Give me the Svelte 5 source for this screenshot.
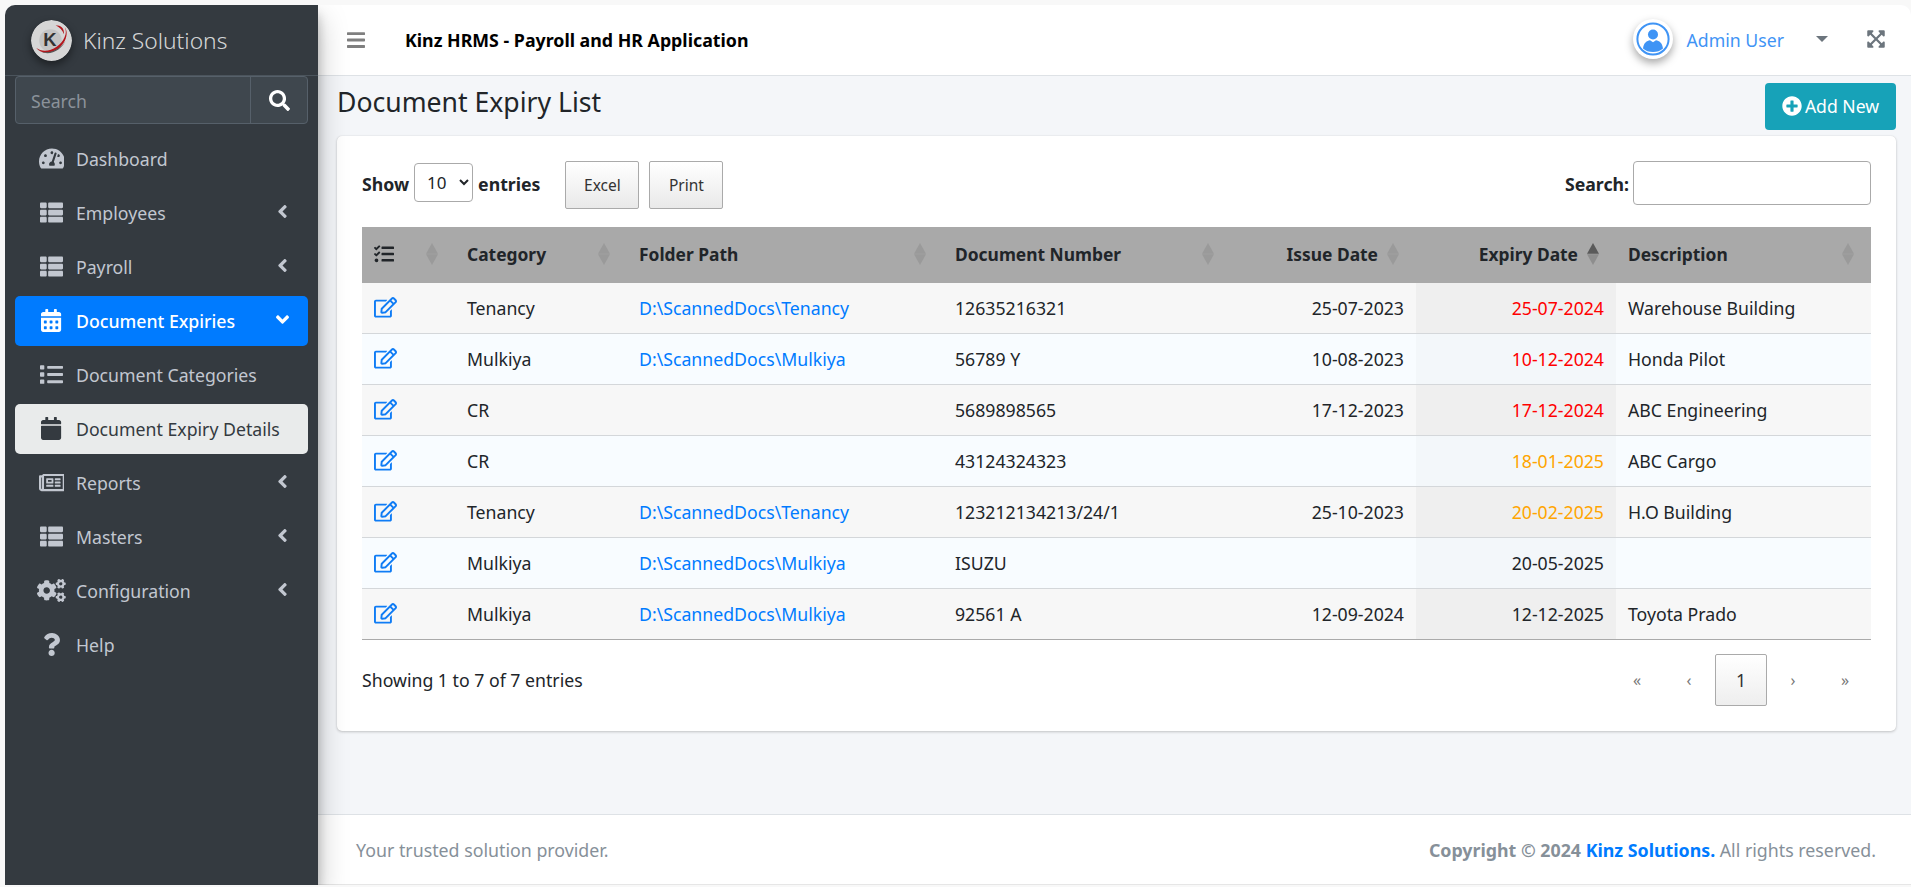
<script>
  const P = {
    dash: [576, "M288 32C128.94 32 0 160.94 0 320c0 52.8 14.25 102.26 39.06 144.8 5.61 9.62 16.3 15.2 27.44 15.2h443c11.14 0 21.83-5.58 27.44-15.2C561.75 422.26 576 372.8 576 320c0-159.06-128.94-288-288-288zm0 64c14.71 0 26.58 10.13 30.32 23.65-1.11 2.26-2.64 4.23-3.45 6.67l-9.22 27.67c-5.13 3.49-10.97 6.01-17.64 6.01-17.67 0-32-14.33-32-32S270.33 96 288 96zM96 384c-17.67 0-32-14.33-32-32s14.33-32 32-32 32 14.33 32 32-14.33 32-32 32zm48-160c-17.67 0-32-14.33-32-32s14.33-32 32-32 32 14.33 32 32-14.33 32-32 32zm246.77-72.41l-61.33 184C343.13 347.33 352 364.54 352 384c0 11.72-3.38 22.55-8.88 32H232.88c-5.5-9.45-8.88-20.28-8.88-32 0-33.94 26.5-61.43 59.9-63.59l61.34-184.01c4.17-12.56 17.73-19.45 30.36-15.17 12.57 4.19 19.35 17.79 15.17 30.36zm14.66 57.2l15.52-46.55c3.47-1.29 7.13-2.23 11.05-2.23 17.67 0 32 14.33 32 32s-14.33 32-32 32c-11.38-.01-20.89-6.28-26.57-15.22zM480 384c-17.67 0-32-14.33-32-32s14.33-32 32-32 32 14.33 32 32-14.33 32-32 32z"],
    thlist: [512, "M149.333 216v80c0 13.255-10.745 24-24 24H24c-13.255 0-24-10.745-24-24v-80c0-13.255 10.745-24 24-24h101.333c13.255 0 24 10.745 24 24zM0 376v80c0 13.255 10.745 24 24 24h101.333c13.255 0 24-10.745 24-24v-80c0-13.255-10.745-24-24-24H24c-13.255 0-24 10.745-24 24zM125.333 32H24C10.745 32 0 42.745 0 56v80c0 13.255 10.745 24 24 24h101.333c13.255 0 24-10.745 24-24V56c0-13.255-10.745-24-24-24zm80 448H488c13.255 0 24-10.745 24-24v-80c0-13.255-10.745-24-24-24H205.333c-13.255 0-24 10.745-24 24v80c0 13.255 10.745 24 24 24zm-24-424v80c0 13.255 10.745 24 24 24H488c13.255 0 24-10.745 24-24V56c0-13.255-10.745-24-24-24H205.333c-13.255 0-24 10.745-24 24zm24 264H488c13.255 0 24-10.745 24-24v-80c0-13.255-10.745-24-24-24H205.333c-13.255 0-24 10.745-24 24v80c0 13.255 10.745 24 24 24z"],
    calalt: [448, "M0 464c0 26.5 21.5 48 48 48h352c26.5 0 48-21.5 48-48V192H0v272zm320-196c0-6.6 5.4-12 12-12h40c6.6 0 12 5.4 12 12v40c0 6.6-5.4 12-12 12h-40c-6.6 0-12-5.4-12-12v-40zm0 128c0-6.6 5.4-12 12-12h40c6.6 0 12 5.4 12 12v40c0 6.6-5.4 12-12 12h-40c-6.6 0-12-5.4-12-12v-40zM192 268c0-6.6 5.4-12 12-12h40c6.6 0 12 5.4 12 12v40c0 6.6-5.4 12-12 12h-40c-6.6 0-12-5.4-12-12v-40zm0 128c0-6.6 5.4-12 12-12h40c6.6 0 12 5.4 12 12v40c0 6.6-5.4 12-12 12h-40c-6.6 0-12-5.4-12-12v-40zM64 268c0-6.6 5.4-12 12-12h40c6.6 0 12 5.4 12 12v40c0 6.6-5.4 12-12 12H76c-6.6 0-12-5.4-12-12v-40zm0 128c0-6.6 5.4-12 12-12h40c6.6 0 12 5.4 12 12v40c0 6.6-5.4 12-12 12H76c-6.6 0-12-5.4-12-12v-40zM400 64h-48V16c0-8.8-7.2-16-16-16h-32c-8.8 0-16 7.2-16 16v48H160V16c0-8.8-7.2-16-16-16h-32c-8.8 0-16 7.2-16 16v48H48C21.5 64 0 85.5 0 112v48h448v-48c0-26.5-21.5-48-48-48z"],
    cal: [448, "M12 192h424c6.6 0 12 5.4 12 12v260c0 26.5-21.5 48-48 48H48c-26.5 0-48-21.5-48-48V204c0-6.6 5.4-12 12-12zm436-44v-36c0-26.5-21.5-48-48-48h-48V12c0-6.6-5.4-12-12-12h-40c-6.6 0-12 5.4-12 12v52H160V12c0-6.6-5.4-12-12-12h-40c-6.6 0-12 5.4-12 12v52H48C21.5 64 0 85.5 0 112v36c0 6.6 5.4 12 12 12h424c6.6 0 12-5.4 12-12z"],
    list: [512, "M80 368H16a16 16 0 0 0-16 16v64a16 16 0 0 0 16 16h64a16 16 0 0 0 16-16v-64a16 16 0 0 0-16-16zm0-320H16A16 16 0 0 0 0 64v64a16 16 0 0 0 16 16h64a16 16 0 0 0 16-16V64a16 16 0 0 0-16-16zm0 160H16a16 16 0 0 0-16 16v64a16 16 0 0 0 16 16h64a16 16 0 0 0 16-16v-64a16 16 0 0 0-16-16zm416 176H176a16 16 0 0 0-16 16v32a16 16 0 0 0 16 16h320a16 16 0 0 0 16-16v-32a16 16 0 0 0-16-16zm0-320H176a16 16 0 0 0-16 16v32a16 16 0 0 0 16 16h320a16 16 0 0 0 16-16V80a16 16 0 0 0-16-16zm0 160H176a16 16 0 0 0-16 16v32a16 16 0 0 0 16 16h320a16 16 0 0 0 16-16v-32a16 16 0 0 0-16-16z"],
    news: [576, "M552 64H112c-20.858 0-38.643 13.377-45.248 32H24c-13.255 0-24 10.745-24 24v272c0 30.928 25.072 56 56 56h496c13.255 0 24-10.745 24-24V88c0-13.255-10.745-24-24-24zM48 392V144h16v248c0 4.411-3.589 8-8 8s-8-3.589-8-8zm480 8H111.422c.374-2.614.578-5.283.578-8V112h416v288zM172 280h136c6.627 0 12-5.373 12-12v-96c0-6.627-5.373-12-12-12H172c-6.627 0-12 5.373-12 12v96c0 6.627 5.373 12 12 12zm28-80h80v40h-80v-40zm-40 140v-24c0-6.627 5.373-12 12-12h136c6.627 0 12 5.373 12 12v24c0 6.627-5.373 12-12 12H172c-6.627 0-12-5.373-12-12zm192 0v-24c0-6.627 5.373-12 12-12h104c6.627 0 12 5.373 12 12v24c0 6.627-5.373 12-12 12H364c-6.627 0-12-5.373-12-12zm0-144v-24c0-6.627 5.373-12 12-12h104c6.627 0 12 5.373 12 12v24c0 6.627-5.373 12-12 12H364c-6.627 0-12-5.373-12-12zm0 72v-24c0-6.627 5.373-12 12-12h104c6.627 0 12 5.373 12 12v24c0 6.627-5.373 12-12 12H364c-6.627 0-12-5.373-12-12z"],
    cogs: [640, "M512.1 191l-8.2 14.3c-3 5.3-9.4 7.5-15.1 5.4-11.8-4.4-22.6-10.7-32.1-18.6-4.6-3.8-5.8-10.5-2.8-15.7l8.2-14.3c-6.9-8-12.3-17.3-15.9-27.4h-16.5c-6 0-11.2-4.3-12.2-10.3-2-12-2.1-24.6 0-37.1 1-6 6.2-10.4 12.2-10.4h16.5c3.6-10.1 9-19.4 15.9-27.4l-8.2-14.3c-3-5.2-1.9-11.9 2.8-15.7 9.5-7.9 20.4-14.2 32.1-18.6 5.7-2.1 12.1.1 15.1 5.4l8.2 14.3c10.5-1.9 21.2-1.9 31.7 0L552 6.3c3-5.3 9.4-7.5 15.1-5.4 11.8 4.4 22.6 10.7 32.1 18.6 4.6 3.8 5.8 10.5 2.8 15.7l-8.2 14.3c6.9 8 12.3 17.3 15.9 27.4h16.5c6 0 11.2 4.3 12.2 10.3 2 12 2.1 24.6 0 37.1-1 6-6.2 10.4-12.2 10.4h-16.5c-3.6 10.1-9 19.4-15.9 27.4l8.2 14.3c3 5.2 1.9 11.9-2.8 15.7-9.5 7.9-20.4 14.2-32.1 18.6-5.7 2.1-12.1-.1-15.1-5.4l-8.2-14.3c-10.4 1.9-21.2 1.9-31.7 0zm-10.5-58.8c38.5 29.6 82.4-14.3 52.8-52.8-38.5-29.7-82.4 14.3-52.8 52.8zM386.3 286.1l33.7 16.8c10.1 5.8 14.5 18.1 10.5 29.1-8.9 24.2-26.4 46.4-42.6 65.8-7.4 8.9-20.2 11.1-30.3 5.3l-29.1-16.8c-16 13.7-34.6 24.6-54.9 31.7v33.6c0 11.6-8.3 21.6-19.7 23.6-24.6 4.2-50.4 4.4-75.9 0-11.5-2-20-11.9-20-23.6V418c-20.3-7.2-38.9-18-54.9-31.7L74 403c-10 5.8-22.9 3.6-30.3-5.3-16.2-19.4-33.3-41.6-42.2-65.7-4-10.9.4-23.2 10.5-29.1l33.3-16.8c-3.9-20.9-3.9-42.4 0-63.4L12 205.8c-10.1-5.8-14.6-18.1-10.5-29 8.9-24.2 26-46.4 42.2-65.8 7.4-8.9 20.2-11.1 30.3-5.3l29.1 16.8c16-13.7 34.6-24.6 54.9-31.7V57.1c0-11.5 8.2-21.5 19.6-23.5 24.6-4.2 50.5-4.4 76-.1 11.5 2 20 11.9 20 23.6v33.6c20.3 7.2 38.9 18 54.9 31.7l29.1-16.8c10-5.8 22.9-3.6 30.3 5.3 16.2 19.4 33.2 41.6 42.1 65.8 4 10.9.1 23.2-10 29.1l-33.7 16.8c3.9 21 3.9 42.5 0 63.5zm-117.6 21.1c59.2-77-28.7-164.9-105.7-105.7-59.2 77 28.7 164.9 105.7 105.7zm243.4 182.7l-8.2 14.3c-3 5.3-9.4 7.5-15.1 5.4-11.8-4.4-22.6-10.7-32.1-18.6-4.6-3.8-5.8-10.5-2.8-15.7l8.2-14.3c-6.9-8-12.3-17.3-15.9-27.4h-16.5c-6 0-11.2-4.3-12.2-10.3-2-12-2.1-24.6 0-37.1 1-6 6.2-10.4 12.2-10.4h16.5c3.6-10.1 9-19.4 15.9-27.4l-8.2-14.3c-3-5.2-1.9-11.9 2.8-15.7 9.5-7.9 20.4-14.2 32.1-18.6 5.7-2.1 12.1.1 15.1 5.4l8.2 14.3c10.5-1.9 21.2-1.9 31.7 0l8.2-14.3c3-5.3 9.4-7.5 15.1-5.4 11.8 4.4 22.6 10.7 32.1 18.6 4.6 3.8 5.8 10.5 2.8 15.7l-8.2 14.3c6.9 8 12.3 17.3 15.9 27.4h16.5c6 0 11.2 4.3 12.2 10.3 2 12 2.1 24.6 0 37.1-1 6-6.2 10.4-12.2 10.4h-16.5c-3.6 10.1-9 19.4-15.9 27.4l8.2 14.3c3 5.2 1.9 11.9-2.8 15.7-9.5 7.9-20.4 14.2-32.1 18.6-5.7 2.1-12.1-.1-15.1-5.4l-8.2-14.3c-10.4 1.9-21.2 1.9-31.7 0zM501.6 431c38.5 29.6 82.4-14.3 52.8-52.8-38.5-29.6-82.4 14.3-52.8 52.8z"],
    help: [384, "M202.021 0C122.202 0 70.503 32.703 29.914 91.026c-7.363 10.58-5.093 25.086 5.178 32.874l43.138 32.709c10.373 7.865 25.132 6.026 33.253-4.148 25.049-31.381 43.63-49.449 82.757-49.449 30.764 0 68.816 19.799 68.816 49.631 0 22.552-18.617 34.134-48.993 51.164-35.423 19.86-82.299 44.576-82.299 106.405V320c0 13.255 10.745 24 24 24h72.471c13.255 0 24-10.745 24-24v-5.773c0-42.86 125.268-44.645 125.268-160.627C377.504 66.256 286.902 0 202.021 0zM192 373.459c-38.196 0-69.271 31.075-69.271 69.271 0 38.195 31.075 69.27 69.271 69.27s69.271-31.075 69.271-69.271-31.075-69.27-69.271-69.27z"],
    left: [256, "M31.7 239l136-136c9.4-9.4 24.6-9.4 33.9 0l22.6 22.6c9.4 9.4 9.4 24.6 0 33.9L127.9 256l96.4 96.4c9.4 9.4 9.4 24.6 0 33.9L201.7 409c-9.4 9.4-24.6 9.4-33.9 0l-136-136c-9.5-9.4-9.5-24.6-.1-34z"],
    down: [320, "M143 352.3L7 216.3c-9.4-9.4-9.4-24.6 0-33.9l22.6-22.6c9.4-9.4 24.6-9.4 33.9 0l96.4 96.4 96.4-96.4c9.4-9.4 24.6-9.4 33.9 0l22.6 22.6c9.4 9.4 9.4 24.6 0 33.9l-136 136c-9.2 9.4-24.4 9.4-33.8 0z"],
    search: [512, "M505 442.7L405.3 343c-4.5-4.5-10.6-7-17-7H372c27.6-35.3 44-79.7 44-128C416 93.1 322.9 0 208 0S0 93.1 0 208s93.1 208 208 208c48.3 0 92.7-16.4 128-44v16.3c0 6.4 2.5 12.5 7 17l99.7 99.7c9.4 9.4 24.6 9.4 33.9 0l28.3-28.3c9.4-9.4 9.4-24.6.1-34zM208 336c-70.7 0-128-57.2-128-128 0-70.7 57.2-128 128-128 70.7 0 128 57.2 128 128 0 70.7-57.2 128-128 128z"],
    bars: [448, "M16 132h416c8.837 0 16-7.163 16-16V76c0-8.837-7.163-16-16-16H16C7.163 60 0 67.163 0 76v40c0 8.837 7.163 16 16 16zm0 160h416c8.837 0 16-7.163 16-16v-40c0-8.837-7.163-16-16-16H16c-8.837 0-16 7.163-16 16v40c0 8.837 7.163 16 16 16zm0 160h416c8.837 0 16-7.163 16-16v-40c0-8.837-7.163-16-16-16H16c-8.837 0-16 7.163-16 16v40c0 8.837 7.163 16 16 16z"],
    expand: [448, "M448 344v112a23.94 23.94 0 0 1-24 24H312c-21.39 0-32.09-25.9-17-41l36.2-36.2L224 295.6 116.77 402.9 153 439c15.09 15.1 4.39 41-17 41H24a23.94 23.94 0 0 1-24-24V344c0-21.4 25.89-32.1 41-17l36.19 36.2L184.46 256 77.18 148.7 41 185c-15.1 15.1-41 4.4-41-17V56a23.94 23.94 0 0 1 24-24h112c21.39 0 32.09 25.9 17 41l-36.2 36.2L224 216.4l107.23-107.3L295 73c-15.09-15.1-4.39-41 17-41h112a23.94 23.94 0 0 1 24 24v112c0 21.4-25.89 32.1-41 17l-36.19-36.2L263.54 256l107.28 107.3L407 327.1c15.1-15.2 41-4.5 41 16.9z"],
    plus: [512, "M256 8C119 8 8 119 8 256s111 248 248 248 248-111 248-248S393 8 256 8zm144 276c0 6.6-5.4 12-12 12h-92v92c0 6.6-5.4 12-12 12h-56c-6.6 0-12-5.4-12-12v-92h-92c-6.6 0-12-5.4-12-12v-56c0-6.6 5.4-12 12-12h92v-92c0-6.6 5.4-12 12-12h56c6.6 0 12 5.4 12 12v92h92c6.6 0 12 5.4 12 12v56z"],
    edit: [576, "M402.3 344.9l32-32c5-5 13.7-1.5 13.7 5.7V464c0 26.5-21.5 48-48 48H48c-26.5 0-48-21.5-48-48V112c0-26.5 21.5-48 48-48h273.5c7.1 0 10.7 8.6 5.7 13.7l-32 32c-1.5 1.5-3.5 2.3-5.7 2.3H48v352h352V350.5c0-2.1.8-4.1 2.3-5.6zm156.6-201.8L296.3 405.7l-90.4 10c-26.2 2.9-48.5-19.2-45.6-45.6l10-90.4L432.9 17.1c22.9-22.9 59.9-22.9 82.7 0l43.2 43.2c22.9 22.9 22.9 60 .1 82.8zM460.1 174L402 115.9 216.2 301.8l-7.3 65.3 65.3-7.3L460.1 174zm64.8-79.7l-43.2-43.2c-4.1-4.1-10.8-4.1-14.8 0L436 82l58.1 58.1 30.9-30.9c4-4.2 4-10.8-.1-14.9z"],
    tasks: [512, "M139.61 35.5a12 12 0 0 0-17 0L58.93 98.81l-22.7-22.12a12 12 0 0 0-17 0L3.53 92.41a12 12 0 0 0 0 17l47.59 47.4a12.78 12.78 0 0 0 17.61 0l15.59-15.62L156.52 69a12.09 12.09 0 0 0 .09-17zm0 159.19a12 12 0 0 0-17 0l-63.68 63.72-22.7-22.1a12 12 0 0 0-17 0L3.53 252a12 12 0 0 0 0 17L51 316.5a12.77 12.77 0 0 0 17.6 0l15.7-15.69 72.2-72.22a12 12 0 0 0 .09-16.9zM64 368c-26.49 0-48.59 21.5-48.59 48S37.53 464 64 464a48 48 0 0 0 0-96zm432 16H208a16 16 0 0 0-16 16v32a16 16 0 0 0 16 16h288a16 16 0 0 0 16-16v-32a16 16 0 0 0-16-16zm0-320H208a16 16 0 0 0-16 16v32a16 16 0 0 0 16 16h288a16 16 0 0 0 16-16V80a16 16 0 0 0-16-16zm0 160H208a16 16 0 0 0-16 16v32a16 16 0 0 0 16 16h288a16 16 0 0 0 16-16v-32a16 16 0 0 0-16-16z"]
  };

  const nav = [
    { icon: 'dash', label: 'Dashboard' },
    { icon: 'thlist', label: 'Employees', arrow: true },
    { icon: 'thlist', label: 'Payroll', arrow: true },
    { icon: 'calalt', label: 'Document Expiries', open: true, cls: 'active' },
    { icon: 'list', label: 'Document Categories' },
    { icon: 'cal', label: 'Document Expiry Details', cls: 'current' },
    { icon: 'news', label: 'Reports', arrow: true },
    { icon: 'thlist', label: 'Masters', arrow: true },
    { icon: 'cogs', label: 'Configuration', arrow: true },
    { icon: 'help', label: 'Help' }
  ];

  const heads = [
    { label: '', cls: 'c0' },
    { label: 'Category', cls: 'c1' },
    { label: 'Folder Path', cls: 'c2' },
    { label: 'Document Number', cls: 'c3' },
    { label: 'Issue Date', cls: 'c4 right' },
    { label: 'Expiry Date', cls: 'c5 right', sorted: true },
    { label: 'Description', cls: 'c6' }
  ];

  const rows = [
    ['Tenancy', 'D:\\ScannedDocs\\Tenancy', '12635216321', '25-07-2023', '25-07-2024', 'red', 'Warehouse Building'],
    ['Mulkiya', 'D:\\ScannedDocs\\Mulkiya', '56789 Y', '10-08-2023', '10-12-2024', 'red', 'Honda Pilot'],
    ['CR', '', '5689898565', '17-12-2023', '17-12-2024', 'red', 'ABC Engineering'],
    ['CR', '', '43124324323', '', '18-01-2025', 'orange', 'ABC Cargo'],
    ['Tenancy', 'D:\\ScannedDocs\\Tenancy', '123212134213/24/1', '25-10-2023', '20-02-2025', 'orange', 'H.O Building'],
    ['Mulkiya', 'D:\\ScannedDocs\\Mulkiya', 'ISUZU', '', '20-05-2025', '', ''],
    ['Mulkiya', 'D:\\ScannedDocs\\Mulkiya', '92561 A', '12-09-2024', '12-12-2025', '', 'Toyota Prado']
  ];
</script>

{#snippet ic(name, cls)}
  <svg class={cls} viewBox="0 0 {P[name][0]} 512" aria-hidden="true"><path fill="currentColor" d={P[name][1]} /></svg>
{/snippet}

{#snippet sortIcon(sorted)}
  <svg class="sort" class:sorted viewBox="0 0 12 22" aria-hidden="true">
    <path class="up" d="M6 0 12 10.700H0Z" />
    <path class="dn" d="M6 22 0 11.300H12Z" />
  </svg>
{/snippet}

<div class="shell">
  <aside class="sidebar">
    <div class="brand">
      <svg class="logo" viewBox="0 0 40 40" aria-hidden="true">
        <circle cx="20" cy="20" r="20" fill="#d6d6d6" />
        <circle cx="19" cy="20" r="11" fill="#c4c4c4" />
        <path d="M5 27C11 35 25 33 32 22 35 17 36 11 33 7 36 13 32 21 25 26 18 31 10 31 5 27Z" fill="#b3171d" />
        <path d="M24 5C29 5 33 8 32 14 31 10 28 7 24 5Z" fill="#b3171d" />
        <path d="M10 31C18 35 30 30 35 18 31 27 20 33 10 31Z" fill="#555" />
        <text x="18.5" y="25.5" class="logok">K</text>
      </svg>
      <span class="brandname">Kinz Solutions</span>
    </div>
    <div class="sidesearch">
      <div class="sideinput">Search</div>
      <div class="sidebtn">{@render ic('search', 'searchicon')}</div>
    </div>
    <nav class="menu">
      {#each nav as n}
        <div class="item {n.cls ?? ''}">
          <span class="iconbox">{@render ic(n.icon, 'navicon')}</span>
          <span class="navlabel">{n.label}</span>
          {#if n.arrow}{@render ic('left', 'chev')}{/if}
          {#if n.open}{@render ic('down', 'chevd')}{/if}
        </div>
      {/each}
    </nav>
  </aside>

  <div class="main">
    <header class="topbar">
      {@render ic('bars', 'bars')}
      <span class="apptitle">Kinz HRMS - Payroll and HR Application</span>
      <span class="spacer"></span>
      <span class="avatar">
        <svg viewBox="0 0 34 34" aria-hidden="true">
          <circle cx="17" cy="17" r="15.6" fill="#fff" stroke="#3f94f5" stroke-width="2" />
          <circle cx="17" cy="12.5" r="5" fill="#3f94f5" />
          <path d="M7 26.5c.5-5.5 4-8 7-8.3l3 2 3-2c3 .3 6.5 2.8 7 8.3-2.6 2.3-6 3.6-10 3.6s-7.4-1.300-10-3.600Z" fill="#3f94f5" />
        </svg>
      </span>
      <span class="username">Admin User</span>
      <span class="caret"></span>
      {@render ic('expand', 'expand')}
    </header>

    <main class="content">
      <div class="titlebar">
        <h1>Document Expiry List</h1>
        <div class="addnew">{@render ic('plus', 'plus')}<span>Add New</span></div>
      </div>

      <section class="card">
        <div class="tools">
          <label class="strong" for="len">Show</label>
          <select id="len" class="len"><option>10</option></select>
          <span class="strong entries">entries</span>
          <button class="dtbtn first">Excel</button>
          <button class="dtbtn">Print</button>
          <span class="spacer"></span>
          <label class="strong searchlbl" for="q">Search:</label>
          <input id="q" class="q" />
        </div>

        <table>
          <thead>
            <tr>
              {#each heads as h, i}
                <th class={h.cls}>
                  <span class="thin">
                    {#if i === 0}{@render ic('tasks', 'tasks')}{:else}{h.label}{/if}
                  </span>
                  {@render sortIcon(h.sorted)}
                </th>
              {/each}
            </tr>
          </thead>
          <tbody>
            {#each rows as r}
              <tr>
                <td>{@render ic('edit', 'edit')}</td>
                <td>{r[0]}</td>
                <td class="link">{r[1]}</td>
                <td>{r[2]}</td>
                <td class="right">{r[3]}</td>
                <td class="right sortcol {r[5]}">{r[4]}</td>
                <td>{r[6]}</td>
              </tr>
            {/each}
          </tbody>
        </table>

        <div class="tfoot">
          <span class="info">Showing 1 to 7 of 7 entries</span>
          <span class="spacer"></span>
          <span class="pg">«</span>
          <span class="pg">‹</span>
          <span class="pgcur">1</span>
          <span class="pg">›</span>
          <span class="pg">»</span>
        </div>
      </section>
    </main>

    <footer class="foot">
      <span>Your trusted solution provider.</span>
      <span class="spacer"></span>
      <span><b>Copyright © 2024 <em>Kinz Solutions.</em></b> All rights reserved.</span>
    </footer>
  </div>
</div>

<style>
  :global(body) {
    margin: 0;
    background: #f8f8f8;
    font-family: "Noto Sans", "Open Sans", sans-serif;
    color: #212529;
  }
  .shell {
    display: flex;
    height: 880px;
    margin: 5px 0 2px 5px;
    overflow: hidden;
    border-radius: 10px 10px 0 0;
  }
  .sidebar {
    width: 313px;
    flex: none;
    background: #343a40;
    box-shadow: 0 14px 28px rgba(0, 0, 0, .25), 0 10px 10px rgba(0, 0, 0, .22);
    position: relative;
    z-index: 2;
    font-size: 17.7px;
  }
  .brand {
    height: 71px;
    box-sizing: border-box;
    border-bottom: 1px solid #4b545c;
    display: flex;
    align-items: center;
    padding-left: 26px;
    gap: 11px;
  }
  .logo {
    width: 41px;
    height: 41px;
    border-radius: 50%;
    box-shadow: 0 4px 8px rgba(0, 0, 0, .45);
  }
  .logok {
    font: 700 18px "Liberation Sans", sans-serif;
    fill: #333;
    text-anchor: middle;
  }
  .brandname {
    font-size: 22.8px;
    font-weight: 300;
    color: rgba(255, 255, 255, .8);
  }
  .sidesearch {
    display: flex;
    height: 48px;
    margin: 0 10px;
    border: 1px solid #56606a;
    border-radius: 4px;
    background: #3f474e;
    box-sizing: border-box;
  }
  .sideinput {
    flex: 1;
    padding-left: 15px;
    color: #8b929a;
    line-height: 48px;
  }
  .sidebtn {
    width: 56px;
    border-left: 1px solid #56606a;
    display: flex;
    align-items: center;
    justify-content: center;
  }
  .searchicon {
    width: 21px;
    height: 21px;
    color: #fff;
  }
  .menu {
    padding: 10px 10px 0;
    display: flex;
    flex-direction: column;
    gap: 4px;
  }
  .item {
    height: 50px;
    display: flex;
    align-items: center;
    border-radius: 5px;
    color: #c2c7d0;
    position: relative;
  }
  .item.active {
    background: #007bff;
    color: #fff;
    font-weight: 500;
  }
  .item.current {
    background: #e9ebeb;
    color: #343a40;
  }
  .iconbox {
    width: 61px;
    padding-left: 12px;
    box-sizing: border-box;
    display: flex;
    justify-content: center;
    flex: none;
  }
  .navicon {
    height: 23px;
    margin-top: -2px;
    display: block;
  }
  .chev {
    position: absolute;
    right: 20px;
    width: 11px;
    height: 21px;
    top: 13px;
  }
  .chevd {
    position: absolute;
    right: 19px;
    width: 13px;
    height: 21px;
    top: 13px;
  }
  .main {
    flex: 1;
    min-width: 0;
    display: flex;
    flex-direction: column;
    background: #f4f6f9;
  }
  .topbar {
    height: 71px;
    flex: none;
    box-sizing: border-box;
    border-bottom: 1px solid #dee2e6;
    background: #fff;
    display: flex;
    align-items: center;
    padding: 0 26px 0 29px;
  }
  .bars {
    width: 18px;
    height: 24px;
    color: rgba(0, 0, 0, .5);
  }
  .apptitle {
    margin-left: 40px;
    font-size: 17.8px;
    font-weight: 700;
    color: #000;
  }
  .spacer {
    flex: 1;
  }
  .avatar {
    width: 40px;
    height: 40px;
    margin-bottom: 3px;
    border-radius: 50%;
    background: #fff;
    box-shadow: 0 4px 8px rgba(0, 0, 0, .35);
    display: flex;
    align-items: center;
    justify-content: center;
  }
  .avatar svg {
    width: 34px;
    height: 34px;
  }
  .username {
    margin-left: 14px;
    font-size: 17.7px;
    color: #3f94f5;
  }
  .caret {
    margin-left: 32px;
    border-top: 6px solid #6c757d;
    border-left: 6px solid transparent;
    border-right: 6px solid transparent;
    margin-bottom: 3px;
  }
  .expand {
    margin-left: 39px;
    width: 18px;
    height: 20px;
    margin-bottom: 2px;
    color: #6c757d;
  }
  .content {
    flex: 1;
    padding: 7px 15px 0 19px;
  }
  .titlebar {
    display: flex;
    justify-content: space-between;
    align-items: flex-start;
    height: 53px;
  }
  h1 {
    margin: 0;
    font-size: 26.6px;
    font-weight: 400;
    line-height: 38px;
  }
  .addnew {
    width: 131px;
    height: 47px;
    padding-bottom: 2px;
    box-sizing: border-box;
    background: #17a2b8;
    color: #fff;
    border-radius: 4px;
    display: flex;
    align-items: center;
    justify-content: center;
    gap: 3px;
    font-size: 17.6px;
  }
  .plus {
    width: 20px;
    height: 20px;
  }
  .card {
    height: 595px;
    box-sizing: border-box;
    background: #fff;
    border-radius: 5px;
    box-shadow: 0 0 1px rgba(0, 0, 0, .125), 0 1px 3px rgba(0, 0, 0, .2);
    padding: 25px;
    font-size: 17.7px;
  }
  .tools {
    display: flex;
    align-items: flex-start;
    height: 48px;
    margin-bottom: 18px;
  }
  .tools label, .tools .entries {
    line-height: 46px;
  }
  .strong {
    font-weight: 700;
  }
  .len {
    width: 59px;
    height: 39px;
    margin: 2px 5px 0;
    font: inherit;
    font-size: 17px;
    padding: 0 0 0 8px;
    background: #fff;
    border: 1px solid #aaa;
    border-radius: 4px;
    color: #212529;
  }
  .dtbtn {
    width: 74px;
    height: 48px;
    box-sizing: border-box;
    margin-left: 10px;
    border: 1px solid #aaa;
    border-radius: 2px;
    background: linear-gradient(#fff, #e9e9e9);
    font: inherit;
    font-size: 15.5px;
    color: #333;
  }
  .dtbtn.first {
    margin-left: 25px;
  }
  .searchlbl {
    margin-right: 4px;
  }
  .q {
    width: 238px;
    height: 44px;
    box-sizing: border-box;
    border: 1px solid #aaa;
    border-radius: 4px;
    background: #fff;
    padding: 0;
  }
  table {
    width: 1509px;
    border-collapse: separate;
    border-spacing: 0;
    table-layout: fixed;
  }
  th {
    height: 56px;
    padding: 0 12px 2px;
    background: #a9a9a9;
    text-align: left;
    position: relative;
    color: #212529;
    font-weight: 700;
    font-size: 17.4px;
    box-sizing: border-box;
  }
  th.right {
    padding-right: 38px;
  }
  th.right, td.right {
    text-align: right;
  }
  .c0 { width: 93px; }
  .c1 { width: 172px; }
  .c2 { width: 316px; }
  .c3 { width: 288px; }
  .c4 { width: 185px; }
  .c5 { width: 200px; }
  .c6 { width: 255px; }
  .sort {
    position: absolute;
    right: 17px;
    top: 16px;
    width: 12px;
    height: 22px;
    fill: #9a9a9a;
  }
  .sort.sorted .up {
    fill: #5a5a5a;
  }
  .sort.sorted .dn {
    fill: #8e8e8e;
  }
  .tasks {
    width: 20px;
    height: 20px;
    display: block;
    color: #212529;
  }
  td {
    height: 51px;
    padding: 0 12px;
    box-sizing: border-box;
    border-bottom: 1px solid #d4d7da;
    background: #f7f7f7;
  }
  tbody tr:nth-child(even) td {
    background: #f8fcff;
  }
  tbody tr:last-child td {
    border-bottom-color: #aaa;
  }
  td.sortcol {
    background: #efefef;
  }
  tbody tr:nth-child(even) td.sortcol {
    background: #f3f7fa;
  }
  td.red { color: #f00; }
  td.orange { color: #ffa500; }
  td.link { color: #007bff; }
  .edit {
    width: 23px;
    height: 20.700px;
    display: block;
    margin-top: -1px;
    color: #0f7cf5;
  }
  .tfoot {
    display: flex;
    align-items: center;
    height: 52px;
    margin-top: 14px;
  }
  .pg {
    width: 52px;
    text-align: center;
    color: #777;
    font-size: 16px;
  }
  .pgcur {
    width: 52px;
    height: 52px;
    box-sizing: border-box;
    border: 1px solid #aaa;
    border-radius: 2px;
    background: linear-gradient(#fff, #eee);
    display: flex;
    align-items: center;
    justify-content: center;
    color: #333;
  }
  .foot {
    height: 71px;
    flex: none;
    box-sizing: border-box;
    border-top: 1px solid #dee2e6;
    border-bottom: 1px solid #e6e6e6;
    background: #fff;
    display: flex;
    align-items: center;
    padding: 0 35px 0 38px;
    font-size: 17.8px;
    color: #869099;
  }
  .foot b {
    font-weight: 700;
  }
  .foot em {
    color: #007bff;
    font-style: normal;
  }
</style>
